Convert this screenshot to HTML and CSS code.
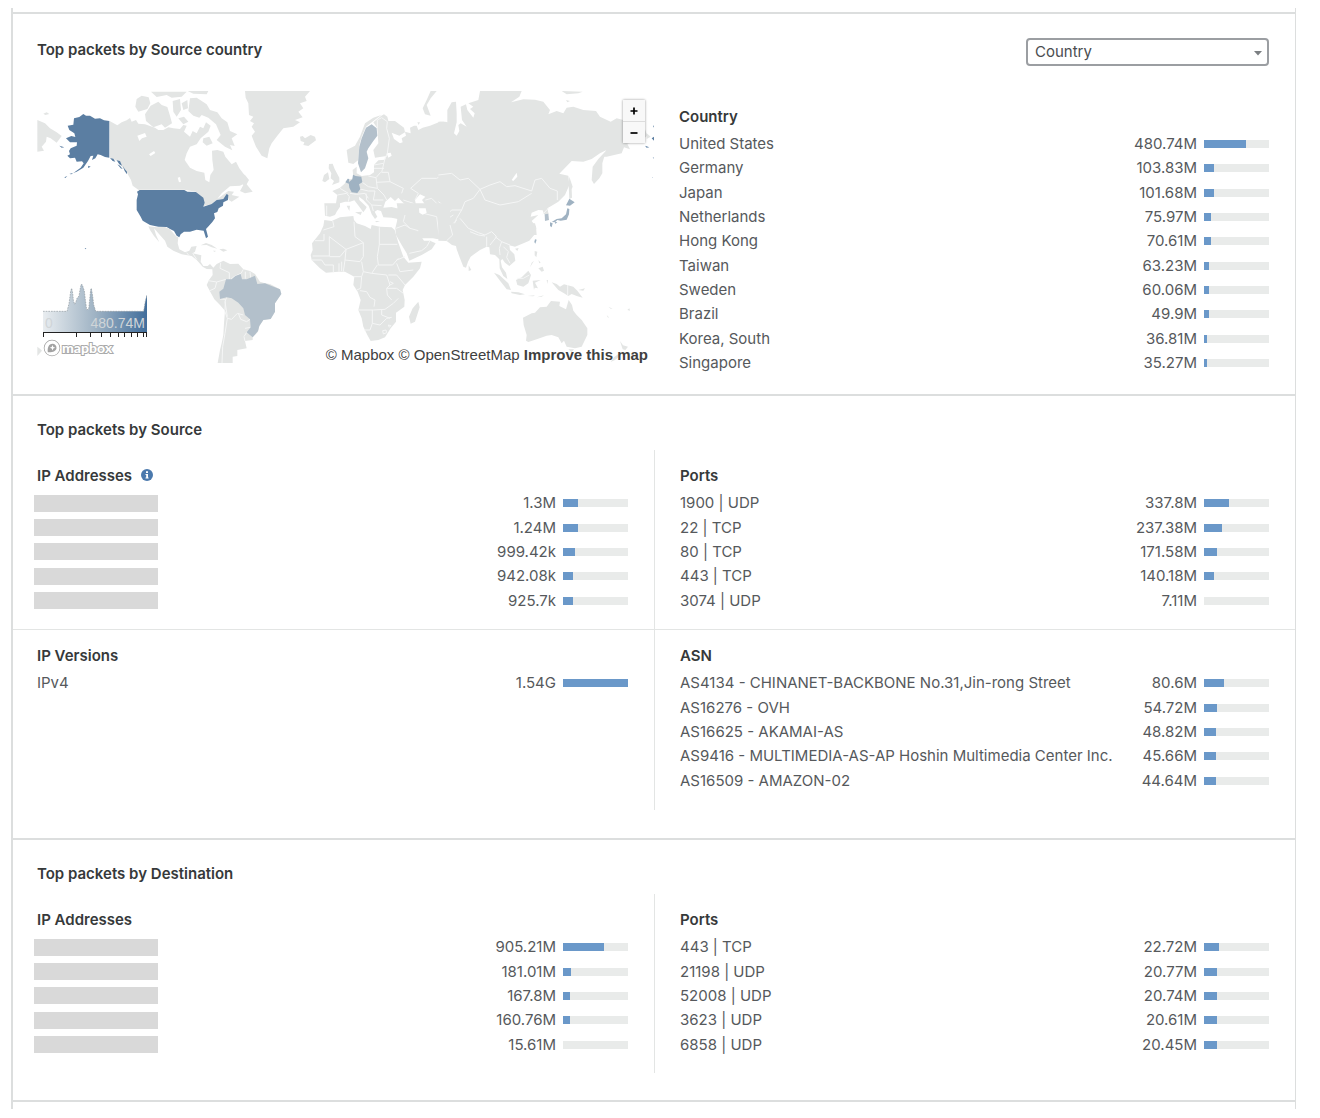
FILE: index.html
```html
<!DOCTYPE html>
<html lang="en">
<head>
<meta charset="utf-8">
<title>Top packets</title>
<link rel="stylesheet" href="styles.css">
</head>
<body>
<main class="report">
  <section class="section">
    <header class="section-head section-head-tools">
      <h2 class="title">Top packets by Source country</h2>
      <div class="picker">
        <select class="picker-select" aria-label="Group by"><option>Country</option></select>
        <svg class="picker-arrow" width="8" height="5" viewBox="0 0 8 5" aria-hidden="true"><path d="M0 0H8L4 4.500Z" fill="#7b7f82"/></svg>
      </div>
    </header>
    <div class="country">
      <div class="map">
        <svg class="map-world" viewBox="111 273 1851 816" role="img" aria-label="World map">
          <!-- North America -->
          <g transform="translate(90 255)" class="land">
            <path d="M22 105 45 115 60 130 80 142 95 153 80 173 62 160 50 155 48 170 35 185 42 197 22 200ZM40 86 50 82 58 87 46 90Z"/>
            <path d="M239 108 262 121 275 112 290 106 300 99 305 110 318 105 325 116 345 118 375 128 385 135 400 135 415 127 430 130 450 132 460 120 470 122 462 140 480 155 488 138 500 145 510 125 520 130 528 112 542 122 535 140 512 160 500 178 480 185 470 205 464 225 480 248 500 258 523 263 526 285 538 292 541 270 551 255 547 225 546 197 562 195 580 200 586 215 600 232 605 238 618 230 628 250 645 272 653 290 630 302 600 304 575 325 562 342 595 318 612 320 605 330 628 335 605 350 597 345 592 330 580 342 560 345 545 357 522 363 515 335 498 320 463 314 325 314 308 302 303 285 290 262 262 228 240 218Z"/>
            <path d="M480 40 500 38 530 58 540 75 562 82 575 100 592 112 600 138 622 148 605 160 614 183 600 180 607 196 585 185 560 165 572 150 558 118 535 98 515 90 508 98 490 92 475 78Z"/>
            <path d="M320 42 335 32 356 37 361 55 352 72 325 80 316 65ZM345 88 362 62 385 50 395 60 412 66 420 92 426 115 405 128 395 118 370 127 348 108ZM428 48 450 42 453 75 440 95 430 80ZM363 20 470 20 455 35 425 38 410 30 380 36ZM473 18 535 18 530 28 490 26ZM445 100 462 95 475 110 460 118ZM455 55 472 45 474 70 460 75ZM520 160 538 155 548 175 530 182 518 172Z"/>
            <path d="M630 265 645 270 657 285 650 298 668 320 645 325 630 318 640 300 632 290Z"/>
            <path class="water" d="M322 152 345 144 350 155 336 160 328 168ZM357 208 372 198 376 204 362 213ZM443 278 450 276 453 290 447 292Z"/>
          </g>
          <g transform="translate(90 255)" class="top">
            <path d="M160 87 168 92 180 92 195 101 210 100 222 106 238 108V218L225 216 212 210 203 208 196 220 186 225 190 212 182 213 174 228 160 248 140 260 130 264 152 248 161 235 156 229 140 230 135 218 120 220 112 212 120 208 117 198 122 190 140 182 141 172 120 172 108 160 124 153 136 156 133 145 118 135 113 122 130 119 132 100 148 96ZM240 219 250 221 256 230 248 228ZM260 226 270 228 276 242 268 238ZM262 238 270 242 278 252 272 250ZM278 242 284 252 291 260 291 268 284 258ZM175 242 182 245 174 249ZM88 182 103 187 95 188ZM118 267 130 263 124 268ZM103 277 112 273 106 279Z"/>
            <path d="M329 315H463L472 320 498 321 520 338 524 353 520 365 545 357 560 345 580 342 590 327 595 330 594 345 580 352 579 362 566 370 562 381 552 385 555 400 547 411 537 422 528 432 534 455 528 460 521 437 500 434 480 440 462 440 452 448 448 457 440 452 432 438 420 432 410 426 385 425 360 420 338 407 332 395 324 382 320 375 320 345 324 328 321 320Z"/>
            <path d="M164 489 169 490 167 493Z"/>
          </g>
          <!-- Central and South America -->
          <g transform="translate(90 660)" class="land">
            <path d="M355 19 380 22 405 21 420 28 430 40 440 50 445 52 443 70 448 88 465 97 478 92 484 80 500 78 495 95 488 100 514 106 512 125 520 138 533 138 540 132 550 143 560 132 580 122 600 132 625 131 640 148 660 153 675 162 690 185 705 190 720 192 750 208 754 222 735 250 735 275 722 297 700 300 688 318 684 335 668 352 668 360 645 363 650 385 622 390 622 408 608 410V429H563L570 390 575 370 580 345 582 310 585 272 570 255 553 238 535 205 530 195 537 180 548 165 547 148 530 147 518 140 500 120 485 108 455 103 430 92 412 80 405 62 385 40 372 25 378 45 388 67 372 48 360 30Z"/>
            <path d="M512 76 528 69 545 75 562 86 545 82 530 75ZM568 88 580 86 592 91 580 95ZM548 92 557 92 555 96ZM22 380 30 386 36 392 22 408Z"/>
            <path class="border" d="M572 128 570 145 598 158 598 178M603 178 612 170 633 160 640 148M646 155V176M660 155 662 175M535 182 560 186 555 205 537 213M560 186 588 178M570 237 586 238 585 270M590 232 585 245 592 290M583 270 592 295 605 298 622 280 640 285M592 295 585 340 578 380 576 429M625 280 632 298 650 305 660 298M662 322 645 325M650 337 642 350 645 363M470 98 478 108M488 100 500 118"/>
          </g>
          <path transform="translate(90 660)" class="low" d="M568 215 580 206 588 178 605 178 616 168 632 162 636 178 650 178 675 167 682 192 705 190 725 198 750 208 754 222 735 250 735 275 722 297 700 300 688 318 684 333 668 352 650 337 662 322 660 298 645 285 640 265 625 248 605 235 590 232 570 237Z"/>
          <!-- Greenland, Europe and western Russia -->
          <g transform="translate(720 255)" class="land">
            <path d="M15 18H210L195 35 200 48 180 55 190 70 175 80 188 97 165 105 180 112 160 125 130 130 112 152 95 175 88 190 82 220 65 212 48 185 42 170 35 152 45 140 35 125 42 115 30 108 40 95 27 90 25 55 17 38Z"/>
            <path d="M180 155 188 153 195 160 212 150 225 155 228 166 205 183 190 180 193 172 182 168Z"/>
            <path d="M267 237 278 236 284 252 298 278 298 292 276 300 282 288 272 280 274 265 266 250ZM252 270 264 262 268 282 255 292 247 288Z"/>
            <path d="M424 92 432 88 442 95 445 108 465 108 492 128 495 142 478 152 455 143 462 162 480 175 488 172 485 160 498 152 495 140 512 145 510 128 522 122 530 122 535 135 548 128 570 122 600 110 612 110V460H485L472 440 470 425 473 402 455 398 430 397 423 378 412 375 404 380 412 395 405 402 395 388 386 362 370 345 357 335 358 345 380 366 377 372 370 382 358 365 343 346 330 350 315 350 300 355 300 365 290 380 285 390 270 395 255 392 253 355 288 355 292 330 277 318 300 308 312 298 325 285 340 280 338 255 350 245 350 265 365 273 390 270 402 262 402 240 415 226 435 224 440 213 405 218 400 195 415 175 412 130 400 112Z"/>
            <path d="M424 90 400 108 378 125 365 155 358 180 355 225 340 237 325 233 320 195 345 182 360 155 375 115 400 98ZM345 382 366 380 362 390ZM320 362 330 362 328 378ZM590 18 572 40 560 60 572 92 555 88 548 70 560 45 572 18ZM532 112 540 112 536 120ZM405 408 420 408 410 412Z"/>
            <path class="water" d="M430 368 436 350 452 336 465 348 475 338 488 352 505 366 480 372 455 366ZM525 345 540 328 556 335 546 345 556 360 545 370 560 388 550 397 533 385ZM440 205 452 203 455 212 445 218Z"/>
            <path class="border" d="M412 130 412 105 425 98 442 110 440 130 448 160 442 205 435 220 425 262 445 262 450 290 490 310 485 325M385 273 408 278 412 310M402 250 432 250M402 240 430 235M408 278 422 262M408 292 450 290M412 310 432 330 440 345M367 292 385 305 412 310M360 312 385 318 405 318 400 345 430 345M330 325 350 328 375 325 385 340M292 330 320 325 328 335 325 350M300 310 325 325M260 362V392M378 325 380 345 395 360 425 362M395 360 400 378M490 345 520 355 525 370M510 365 515 395 535 395M525 345 535 325 512 310 545 280 590 280 612 268M556 345 575 340 595 360 612 350M560 388 600 390 612 400M475 398 500 395 515 395 530 430 530 450M500 395 490 425 475 430M570 360 590 375 612 380"/>
            <path class="low" d="M395 118 410 130 412 152 400 168 385 190 380 200 385 220 375 250 363 262 354 235 358 185 365 160 378 128Z"/>
            <path class="mid" d="M339 269 347 273 364 275 367 292 357 298 361 312 352 324 335 322 328 308 326 292 337 283ZM316 292 323 281 328 282 326 296Z"/>
          </g>
          <!-- Northern Asia -->
          <g transform="translate(1320 255)" class="land">
            <path d="M-5 110 15 110 22 112 22 75 35 52 48 50 50 85 50 112 42 145 50 152 58 138 55 120 62 115 80 125 66 105 62 65 78 58 82 75 100 98 104 85 90 72 100 65 85 55 115 45 120 18H245L238 35 213 52 250 43 285 44 310 50 330 75 325 88 350 78 370 85 380 68 400 65 430 75 468 78 480 95 512 110 530 100 550 105H605L622 152 605 165 562 176 570 193 552 187 545 205 500 215 490 215 498 196 480 205 455 222 430 230 395 228 358 266 385 272 388 300 375 330 355 350 335 362 322 370 326 388H312L308 376 295 375 275 383 272 395 295 390 275 408 288 425 290 450H-5Z"/>
            <path d="M498 197 487 235 487 265 478 280 462 297 455 285 458 245 475 222ZM388 275 398 305 395 312 396 338 388 342 386 300ZM365 18 428 20 415 25 380 28ZM378 45 390 48 382 52ZM620 145 632 155 620 162Z"/>
            <path class="water" d="M215 285 230 263 232 275 220 288Z"/>
            <path class="border" d="M-5 270 35 265 60 285 85 280 120 313 150 300 180 290 200 305 225 302 275 318 285 285 305 280 330 310 352 318 352 345M120 313 135 345 180 360 235 350 275 325M120 313 100 340 75 350 65 375 35 375 20 390-5 385M65 375 50 400 40 425 75 430 95 450M-5 350 25 372M40 390 10 410M308 388 325 370M0 420 30 415"/>
            <path class="mid" d="M388 341 404 352 390 362 378 361ZM382 370 388 372 387 388 380 404 362 407 352 405 345 412 335 411 350 402 365 400 378 388ZM330 412 338 415 335 427 330 423ZM345 411 352 411 346 417Z"/>
            <path class="low" d="M314 388 325 386 327 405 315 408Z"/>
            <path class="top" d="M635 160 642 155V167ZM615 182 628 187 620 188ZM638 217 642 218V221ZM637 277 639 277V279ZM639 122H642V128Z"/>
          </g>
          <!-- Africa and western Asia -->
          <g transform="translate(870 630)" class="land">
            <path d="M320-20H480V93L460 88 440 87 420 82 405 72 388 55 380 62 395 82 402 92 420 92 437 100 425 118 395 135 358 152 350 130 335 105 318 75 316 55 322 30 322-10Z"/>
            <path d="M103 30 125 33 150 22 190 18 192 30 200 40 225 48 242 57 245 45 270 50 305 52 314 60 325 98 340 140 355 158 395 155 390 175 370 200 345 225 338 240 344 270 343 290 318 308 318 335 302 355 285 382 265 390 242 393 232 375 220 350 215 325 205 300 212 270 203 245 190 225 193 200 165 185 145 185 108 188 90 175 65 150 62 135 68 120 66 100 90 70 100 48ZM385 275 389 292 375 335 362 341 357 320 368 295Z"/>
            <path class="border" d="M128 32 132 50 100 60M75 92H102V72M118 80 168 118 220 98 195 80 192 35M118 80V138H68M118 140 150 140 168 118M66 150H95L105 165M220 98V140L210 155 165 150 168 118M268 52V103H322M268 103 262 140 265 165 308 165 325 145M262 165 245 190 220 185 215 155M130 165V187M147 160V185M155 155V183M105 165 130 165M165 150 160 185M190 200H215L220 185M215 200 212 235 200 240M245 190 290 195 300 225 290 235 292 255 305 270M210 242 230 245 240 262 255 270 252 290M205 300H250L285 298 310 280 325 265M290 235 320 235 340 250M295 195 320 195 345 225M320 160 330 185 370 180M345 140 320 150M247 300V340L270 345 290 325 305 322M247 340 240 360 222 360M275 300 275 315 300 325M278 362 288 360 290 368 280 372ZM295 345 303 347 298 352ZM318 55 345 45 360 55 385 62M358 130 395 122 410 110 420 92M360 55 340 35 345 15M400 10 440 20 445 60 450 85M445 60 480 50 500 30M300 215 310 220 300 225"/>
            <path class="water" d="M387-5 407-5 410 8 398 14 388 8Z"/>
          </g>
          <!-- Southern Asia and Oceania -->
          <g transform="translate(1320 660)" class="land">
            <path d="M-5 10H285L289 25 285 42 268 62 245 72 225 80 208 76 210 90 223 103 226 122 208 138 195 128 187 117 182 122 186 142 198 158 202 177 190 168 179 145 178 118 165 105 150 103 148 82 140 80 120 90 92 110 84 125 78 143 70 140 60 115 50 88 48 78 36 75 20 63-5 62Z"/>
            <path d="M86 136 94 150 86 153ZM162 158 178 165 205 190 213 210 200 208 180 182ZM213 215 235 217 255 223 240 225 215 220ZM228 180 245 172 265 152 273 165 265 190 250 200 232 195ZM278 182 302 180 285 188 294 205 284 203 282 210ZM335 187 350 192 360 200 372 193 400 200 412 212 428 233 410 228 395 222 385 228 372 220 355 210ZM225 86 236 84 232 93ZM284 93 292 95 289 112 284 106ZM295 120 302 128 298 130ZM295 145 308 140 312 152 305 155ZM262 228 285 226 280 229ZM290 232 312 226 305 230ZM415 210 435 205 430 212ZM320 180 324 180 322 192ZM500 285 508 293 503 292ZM562 270 568 265 570 272ZM505 260 518 266 512 266ZM275 128 282 122 270 142Z"/>
            <path d="M249 293 275 280 285 278 300 262 320 260 333 243 360 245 358 258 378 268 386 240 396 255 400 272 410 285 425 300 442 325 442 345 425 380 405 385 380 380 372 362 365 370 355 352 335 345 320 347 290 358 265 366 258 362 260 345 251 315ZM385 388 402 388 395 397ZM540 363 549 376 564 380 556 390 548 388ZM540 398 544 404 525 420 512 426 522 412Z"/>
            <path class="border" d="M383 195V228M30 15 38 45 20 62M60-5 85 25 115 38 135 45 155 35 170 50 150 75M90 35 115 45 135 48M140 50 140 80M165 50 185 65 178 85 180 105M185 65 210 75M190 80 205 95 200 112 210 130M232 175 250 175 268 165"/>
            <path class="mid" d="M285 58 290 59 286 71 283 66Z"/>
          </g>
        </svg>
        <div class="map-zoom">
          <button class="map-zoom-button" type="button" aria-label="Zoom in"><svg width="8" height="8" viewBox="0 0 8 8" aria-hidden="true"><path d="M4 .5V7.500M.5 4H7.500" stroke="#000" stroke-width="1.700"/></svg></button>
          <button class="map-zoom-button" type="button" aria-label="Zoom out"><svg width="8" height="8" viewBox="0 0 8 8" aria-hidden="true"><path d="M.5 4H7.500" stroke="#000" stroke-width="1.700"/></svg></button>
        </div>
        <div class="map-legend">
          <svg class="map-density" width="104" height="29" viewBox="0 0 312 87" aria-hidden="true">
            <defs><linearGradient id="density"><stop offset="0" stop-color="#e9edf0"/><stop offset=".5" stop-color="#9fb3c4"/><stop offset="1" stop-color="#416e9c"/></linearGradient></defs>
            <path d="M0 85H72L78 62 83 25 86 16 89 30 91 52 95 64 99 56 102 46 108 39 112 15 115 3 118 6 124 24 127 50 131 80 137 79 140 50 143 20 145 16 149 40 152 65 158 85H302L307 55 312 35V87H0Z" fill="url(#density)"/>
            <path d="M0 85H72L78 62 83 25 86 16 89 30 91 52 95 64 99 56 102 46 108 39 112 15 115 3 118 6 124 24 127 50 131 80 137 79 140 50 143 20 145 16 149 40 152 65 158 85H302L307 55 312 35" fill="none" stroke="#8f989f" stroke-width="2" stroke-dasharray="5 3"/>
          </svg>
          <div class="map-scale"><span>0</span><span>480.74M</span></div>
          <svg class="map-ticks" width="104" height="5" viewBox="0 0 104 5" aria-hidden="true"><path d="M0 .5H104M.5 0V5M33.500 0V5M47.500 0V5M58.500 0V5M67.500 0V5M75.500 0V5M81.500 0V5M88.500 0V5M94.500 0V5M100.500 0V5M103.500 0V5" stroke="#222" fill="none"/></svg>
          <a class="map-brand" href="#mapbox">
            <svg width="18" height="18" viewBox="0 0 18 18" aria-hidden="true"><circle cx="9" cy="9" r="7.500" fill="#fff" stroke="#a2a2a2" stroke-width="1.500"/><path d="M4.800 13.200C4.300 9 5.500 4.800 9.500 4.800A4 4 0 0 1 13.500 9C13.500 12 9 13.700 4.800 13.200Z" fill="#a2a2a2"/><path d="M9.500 6 10.300 8 12.300 8.800 10.300 9.600 9.500 11.600 8.700 9.600 6.700 8.800 8.700 8Z" fill="#fff"/></svg>
            <span>mapbox</span>
          </a>
        </div>
        <div class="map-credit"><a href="#mapbox">© Mapbox</a> <a href="#osm">© OpenStreetMap</a> <a class="map-improve" href="#improve">Improve this map</a></div>
      </div>
      <div class="country-list">
        <h3 class="list-title" id="country">Country</h3>
        <table class="stats stats-ten" aria-labelledby="country">
          <tr><th scope="row">United States</th><td>480.74M</td><td class="meter"><div class="track"><div class="fill" style="width:65%"></div></div></td></tr>
          <tr><th scope="row">Germany</th><td>103.83M</td><td class="meter"><div class="track"><div class="fill" style="width:15%"></div></div></td></tr>
          <tr><th scope="row">Japan</th><td>101.68M</td><td class="meter"><div class="track"><div class="fill" style="width:15%"></div></div></td></tr>
          <tr><th scope="row">Netherlands</th><td>75.97M</td><td class="meter"><div class="track"><div class="fill" style="width:10%"></div></div></td></tr>
          <tr><th scope="row">Hong Kong</th><td>70.61M</td><td class="meter"><div class="track"><div class="fill" style="width:10%"></div></div></td></tr>
          <tr><th scope="row">Taiwan</th><td>63.23M</td><td class="meter"><div class="track"><div class="fill" style="width:8%"></div></div></td></tr>
          <tr><th scope="row">Sweden</th><td>60.06M</td><td class="meter"><div class="track"><div class="fill" style="width:8%"></div></div></td></tr>
          <tr><th scope="row">Brazil</th><td>49.9M</td><td class="meter"><div class="track"><div class="fill" style="width:7%"></div></div></td></tr>
          <tr><th scope="row">Korea, South</th><td>36.81M</td><td class="meter"><div class="track"><div class="fill" style="width:5%"></div></div></td></tr>
          <tr><th scope="row">Singapore</th><td>35.27M</td><td class="meter"><div class="track"><div class="fill" style="width:5%"></div></div></td></tr>
        </table>
      </div>
    </div>
  </section>

  <section class="section">
    <header class="section-head"><h2 class="title">Top packets by Source</h2></header>
    <div class="grid">
      <div class="cell">
        <h3 class="list-title" id="src-ip">IP Addresses <svg class="info" width="12" height="12" viewBox="0 0 12 12" aria-hidden="true"><circle cx="6" cy="6" r="6" fill="#4b79ad"/><path d="M5 2.200H7V3.900H5ZM4.500 4.900H7V8.400H7.600V9.400H4.500V8.400H5.200V5.900H4.500Z" fill="#fff"/></svg></h3>
        <table class="stats stats-five" aria-labelledby="src-ip">
          <tr><th scope="row"><span class="masked"></span></th><td>1.3M</td><td class="meter"><div class="track"><div class="fill" style="width:23%"></div></div></td></tr>
          <tr><th scope="row"><span class="masked"></span></th><td>1.24M</td><td class="meter"><div class="track"><div class="fill" style="width:23%"></div></div></td></tr>
          <tr><th scope="row"><span class="masked"></span></th><td>999.42k</td><td class="meter"><div class="track"><div class="fill" style="width:18%"></div></div></td></tr>
          <tr><th scope="row"><span class="masked"></span></th><td>942.08k</td><td class="meter"><div class="track"><div class="fill" style="width:15%"></div></div></td></tr>
          <tr><th scope="row"><span class="masked"></span></th><td>925.7k</td><td class="meter"><div class="track"><div class="fill" style="width:15%"></div></div></td></tr>
        </table>
      </div>
      <div class="cell">
        <h3 class="list-title" id="src-ports">Ports</h3>
        <table class="stats stats-five" aria-labelledby="src-ports">
          <tr><th scope="row">1900 | UDP</th><td>337.8M</td><td class="meter"><div class="track"><div class="fill" style="width:38%"></div></div></td></tr>
          <tr><th scope="row">22 | TCP</th><td>237.38M</td><td class="meter"><div class="track"><div class="fill" style="width:28%"></div></div></td></tr>
          <tr><th scope="row">80 | TCP</th><td>171.58M</td><td class="meter"><div class="track"><div class="fill" style="width:20%"></div></div></td></tr>
          <tr><th scope="row">443 | TCP</th><td>140.18M</td><td class="meter"><div class="track"><div class="fill" style="width:15%"></div></div></td></tr>
          <tr><th scope="row">3074 | UDP</th><td>7.11M</td><td class="meter"><div class="track"><div class="fill" style="width:0%"></div></div></td></tr>
        </table>
      </div>
      <div class="cell cell-next">
        <h3 class="list-title" id="src-versions">IP Versions</h3>
        <table class="stats" aria-labelledby="src-versions">
          <tr><th scope="row">IPv4</th><td>1.54G</td><td class="meter"><div class="track"><div class="fill" style="width:100%"></div></div></td></tr>
        </table>
      </div>
      <div class="cell cell-next">
        <h3 class="list-title" id="src-asn">ASN</h3>
        <table class="stats stats-five" aria-labelledby="src-asn">
          <tr><th scope="row">AS4134 - CHINANET-BACKBONE No.31,Jin-rong Street</th><td>80.6M</td><td class="meter"><div class="track"><div class="fill" style="width:30%"></div></div></td></tr>
          <tr><th scope="row">AS16276 - OVH</th><td>54.72M</td><td class="meter"><div class="track"><div class="fill" style="width:20%"></div></div></td></tr>
          <tr><th scope="row">AS16625 - AKAMAI-AS</th><td>48.82M</td><td class="meter"><div class="track"><div class="fill" style="width:18%"></div></div></td></tr>
          <tr><th scope="row">AS9416 - MULTIMEDIA-AS-AP Hoshin Multimedia Center Inc.</th><td>45.66M</td><td class="meter"><div class="track"><div class="fill" style="width:18%"></div></div></td></tr>
          <tr><th scope="row">AS16509 - AMAZON-02</th><td>44.64M</td><td class="meter"><div class="track"><div class="fill" style="width:18%"></div></div></td></tr>
        </table>
      </div>
    </div>
  </section>

  <section class="section">
    <header class="section-head"><h2 class="title">Top packets by Destination</h2></header>
    <div class="grid">
      <div class="cell">
        <h3 class="list-title" id="dst-ip">IP Addresses</h3>
        <table class="stats stats-five" aria-labelledby="dst-ip">
          <tr><th scope="row"><span class="masked"></span></th><td>905.21M</td><td class="meter"><div class="track"><div class="fill" style="width:63%"></div></div></td></tr>
          <tr><th scope="row"><span class="masked"></span></th><td>181.01M</td><td class="meter"><div class="track"><div class="fill" style="width:13%"></div></div></td></tr>
          <tr><th scope="row"><span class="masked"></span></th><td>167.8M</td><td class="meter"><div class="track"><div class="fill" style="width:10%"></div></div></td></tr>
          <tr><th scope="row"><span class="masked"></span></th><td>160.76M</td><td class="meter"><div class="track"><div class="fill" style="width:10%"></div></div></td></tr>
          <tr><th scope="row"><span class="masked"></span></th><td>15.61M</td><td class="meter"><div class="track"><div class="fill" style="width:0%"></div></div></td></tr>
        </table>
      </div>
      <div class="cell">
        <h3 class="list-title" id="dst-ports">Ports</h3>
        <table class="stats stats-five" aria-labelledby="dst-ports">
          <tr><th scope="row">443 | TCP</th><td>22.72M</td><td class="meter"><div class="track"><div class="fill" style="width:23%"></div></div></td></tr>
          <tr><th scope="row">21198 | UDP</th><td>20.77M</td><td class="meter"><div class="track"><div class="fill" style="width:20%"></div></div></td></tr>
          <tr><th scope="row">52008 | UDP</th><td>20.74M</td><td class="meter"><div class="track"><div class="fill" style="width:20%"></div></div></td></tr>
          <tr><th scope="row">3623 | UDP</th><td>20.61M</td><td class="meter"><div class="track"><div class="fill" style="width:20%"></div></div></td></tr>
          <tr><th scope="row">6858 | UDP</th><td>20.45M</td><td class="meter"><div class="track"><div class="fill" style="width:20%"></div></div></td></tr>
        </table>
      </div>
    </div>
  </section>
</main>
</body>
</html>
```
FILE: styles.css
```css
* { box-sizing: border-box; }

body {
  margin: 8px 24px 8px 11px;
  background: #fff;
  color: #56595c;
  font: 15px/24px Inter, sans-serif;
}

.report {
  padding: 4px 0 7px;
  border: solid #dcdede;
  border-width: 0 1px 0 2px;
}

.section {
  border-top: 2px solid #dcdede;
  padding-bottom: 28px;
}

.section:first-child { padding-bottom: 19px; }

.section:last-child {
  padding-bottom: 27px;
  border-bottom: 2px solid #dcdede;
}

.section-head { padding: 22px 26px 8px 24px; }

.section-head-tools {
  display: flex;
  justify-content: space-between;
  align-items: flex-start;
  padding: 24px 26px 25px 24px;
}

.title,
.list-title {
  margin: 0;
  color: #36393a;
  font-size: 15px;
  font-weight: 600;
  line-height: 24px;
}

.list-title { margin-bottom: 3px; }
.info { margin-left: 5px; }

/* Drop-down */
.picker { position: relative; width: 243px; }

.picker-select {
  display: block;
  width: 100%;
  height: 28px;
  padding: 0 24px 0 7px;
  appearance: none;
  border: 2px solid #9b9ea2;
  border-radius: 4px;
  background: #fff;
  color: #4a4d50;
  font: inherit;
}

.picker-arrow {
  position: absolute;
  top: 13px;
  right: 7px;
  pointer-events: none;
}

/* Country map */
.country {
  display: grid;
  grid-template-columns: 1fr 1fr;
  align-items: start;
}

.map { position: relative; margin-left: 24px; }
.map-world { display: block; width: 100%; }
.land { fill: #e3e5e4; }
.water { fill: #fff; }
.border { fill: none; stroke: #f5f6f6; stroke-width: 3px; }
.top { fill: #5b7ea2; }
.mid { fill: #9fb2c2; }
.low { fill: #b3c0cb; }

.map-zoom {
  position: absolute;
  top: 9px;
  right: 9px;
  width: 22px;
  border-radius: 2px;
  box-shadow: 0 0 2px 1px rgb(0 0 0 / 20%);
}

.map-zoom-button {
  display: flex;
  align-items: center;
  justify-content: center;
  width: 100%;
  height: 21px;
  padding: 0;
  border: 0;
  background: #f8f8f8;
}

.map-zoom-button + .map-zoom-button {
  height: 22px;
  border-top: 1px solid #ddd;
}

.map-legend {
  position: absolute;
  bottom: 6px;
  left: 6px;
  width: 104px;
}

.map-density,
.map-ticks { display: block; }

.map-scale {
  display: flex;
  justify-content: space-between;
  padding: 2px 2px 0;
  background: linear-gradient(90deg, #e9edf0, #9fb3c4 50%, #416e9c);
  color: #d0d5d8;
  font: 14px/18px "Liberation Sans", sans-serif;
}

.map-brand {
  display: flex;
  align-items: center;
  gap: 1px;
  height: 18px;
  margin-top: 2px;
  color: #fff;
  font: 900 14px/16px Lato, sans-serif;
  text-decoration: none;
  -webkit-text-stroke: 2px #aaa;
  paint-order: stroke fill;
}

.map-credit {
  position: absolute;
  right: 6px;
  bottom: 0;
  font: 15px/16px "Liberation Sans", sans-serif;
}

.map-credit a { color: #404040; text-decoration: none; }
.map-credit .map-improve { font-weight: 700; }

.country-list { padding: 14px 26px 0 25px; }

/* Two-column lists */
.grid {
  display: grid;
  grid-template-columns: 1fr 1fr;
}

.cell { padding: 14px 26px 16px 24px; }
.cell:nth-child(even) { padding-left: 25px; border-left: 1px solid #e3e5e4; }

.cell-next {
  padding-bottom: 17px;
  border-top: 1px solid #e3e5e4;
}

.stats {
  width: 100%;
  border-collapse: collapse;
}

.stats-five { height: 122px; }
.stats-ten { height: 243px; }

.stats th,
.stats td {
  height: 24px;
  padding: 0;
  font-weight: 400;
  text-align: left;
  white-space: nowrap;
}

.stats td { text-align: right; }
.stats .meter { width: 72px; padding-left: 7px; }

.track { height: 8px; background: #e9ebea; }
.fill { height: 100%; background: #6a98c9; }

.masked {
  display: block;
  width: 124px;
  height: 17px;
  margin-left: -3px;
  background: #d9d9d9;
}
```
